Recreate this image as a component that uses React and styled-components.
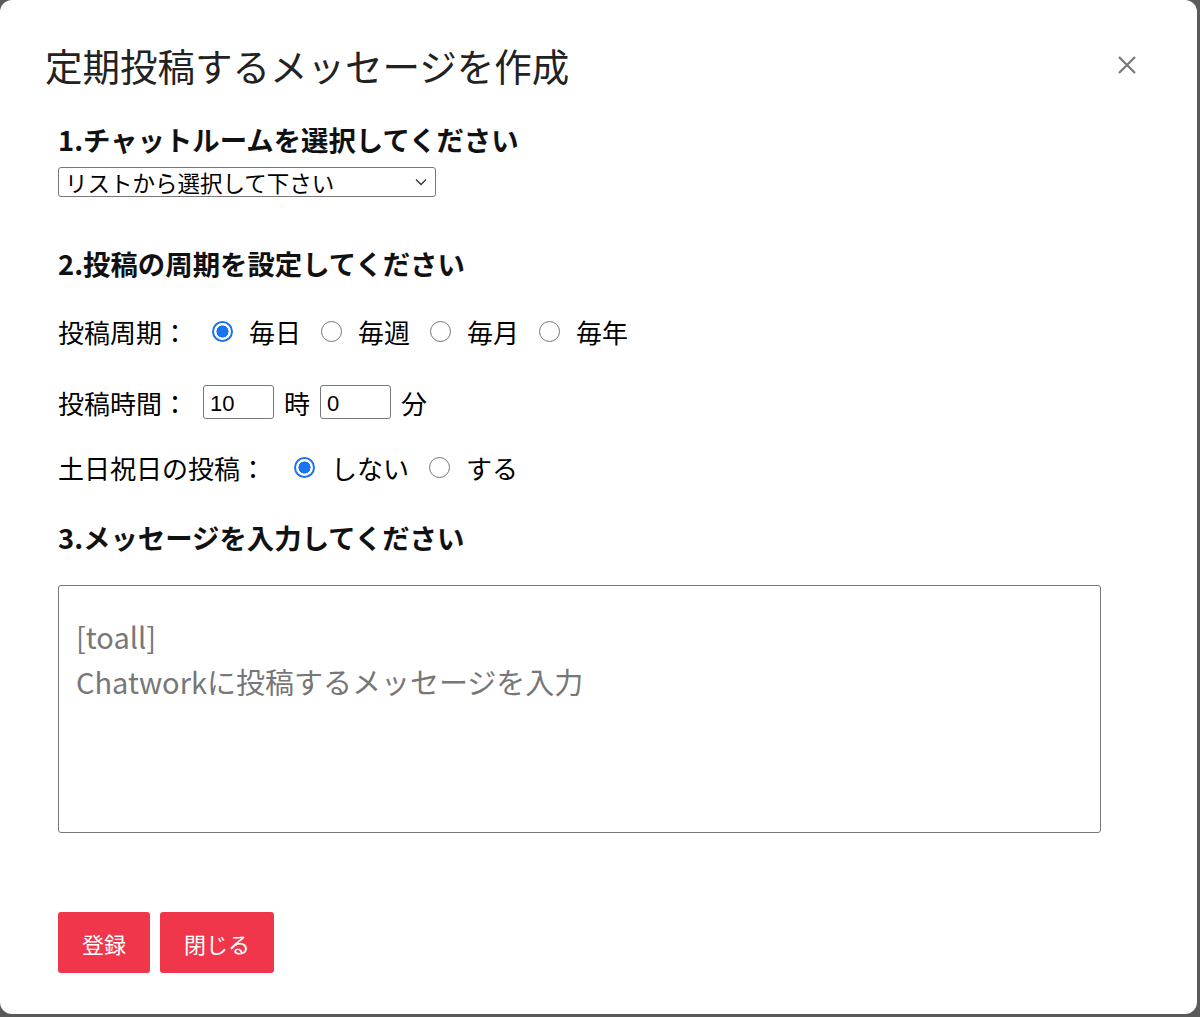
import React from 'react';
import styled, { createGlobalStyle } from 'styled-components';

const GlobalStyle = createGlobalStyle`
  html, body {
    margin: 0;
    padding: 0;
    background: #5a5a5a;
  }
  body {
    font-family: "Noto Sans CJK JP", "Noto Sans", sans-serif;
  }
`;

const Modal = styled.div`
  width: 1197px;
  height: 1014px;
  box-sizing: border-box;
  background: #ffffff;
  border-radius: 12px;
  padding: 43px 0 0 0;
  display: flex;
  flex-direction: column;
`;

const Header = styled.div`
  display: flex;
  align-items: center;
  justify-content: space-between;
  padding: 0 58px 0 45px;
`;

const Title = styled.h2`
  margin: 0;
  font-size: 37.5px;
  line-height: 44px;
  font-weight: 400;
  color: #222;
`;

const CloseButton = styled.button`
  border: none;
  background: none;
  padding: 0;
  width: 24px;
  height: 24px;
  display: flex;
  align-items: center;
  justify-content: center;
  cursor: pointer;
`;

const Body = styled.div`
  padding: 0 96px 0 58px;
  display: flex;
  flex-direction: column;
`;

const Heading = styled.h3`
  margin: ${p => p.$top}px 0 0 0;
  font-size: 27.4px;
  line-height: 32px;
  font-weight: 700;
  color: #111;
`;

const Select = styled.select`
  margin-top: 12px;
  width: 378px;
  height: 30px;
  font-family: inherit;
  font-size: 22.5px;
  line-height: 28px;
  color: #000;
  border: 1px solid #777;
  border-radius: 3px;
  background: #fff;
  padding: 0 6px;
  appearance: none;
  background-image: url("data:image/svg+xml,%3Csvg xmlns='http://www.w3.org/2000/svg' width='12' height='8' viewBox='0 0 12 8'%3E%3Cpath d='M1 1.5l5 5 5-5' fill='none' stroke='%23333' stroke-width='1.3'/%3E%3C/svg%3E");
  background-repeat: no-repeat;
  background-position: right 8px center;
`;

const Row = styled.div`
  margin-top: ${p => p.$top}px;
  height: 34px;
  display: flex;
  align-items: center;
  font-size: 26px;
  color: #000;
`;

const RowLabel = styled.span`
  margin-right: ${p => p.$gap}px;
`;

const Radio = styled.input.attrs({ type: 'radio' })`
  appearance: none;
  margin: 0 16px 0 0;
  width: 21px;
  height: 21px;
  border-radius: 50%;
  border: 1.5px solid #767676;
  background: #fff;
  box-sizing: border-box;
  flex-shrink: 0;
  &:checked {
    border: 2px solid #1a73f0;
    background: radial-gradient(circle, #1a73f0 0 5.8px, #fff 6.3px);
  }
`;

const Option = styled.label`
  display: flex;
  align-items: center;
  margin-right: 20px;
`;

const NumberInput = styled.input`
  width: 71px;
  height: 34px;
  box-sizing: border-box;
  border: 1px solid #777;
  border-radius: 3px;
  font-family: "Liberation Sans", Arial, sans-serif;
  font-size: 22px;
  padding: 4px 6px 0;
  color: #000;
  margin: 0 10px 0 0;
`;

const Unit = styled.span`
  margin-right: 10px;
`;

const TextArea = styled.textarea`
  margin-top: 32px;
  width: 1043px;
  height: 248px;
  box-sizing: border-box;
  border: 1.5px solid #777;
  border-radius: 3px;
  padding: 28px 17px;
  font-family: "Noto Sans CJK JP", sans-serif;
  font-size: 29px;
  line-height: 45px;
  resize: none;
  &::placeholder {
    color: #777;
  }
`;

const Footer = styled.div`
  margin-top: 79px;
  display: flex;
  gap: 10px;
`;

const RedButton = styled.button`
  height: 61px;
  padding: 0 ${p => p.$pad}px;
  background: #f0364a;
  color: #fff;
  border: none;
  border-radius: 3px;
  font-family: "Noto Sans CJK JP", sans-serif;
  font-size: 22px;
  cursor: pointer;
`;

export default function App() {
  return (
    <>
      <GlobalStyle />
      <Modal>
        <Header>
          <Title>定期投稿するメッセージを作成</Title>
          <CloseButton aria-label="close">
            <svg width="20" height="20" viewBox="0 0 20 20">
              <path d="M2 2L18 18M18 2L2 18" stroke="#777" strokeWidth="2.2" />
            </svg>
          </CloseButton>
        </Header>
        <Body>
          <Heading $top={36}>1.チャットルームを選択してください</Heading>
          <Select defaultValue="">
            <option value="">リストから選択して下さい</option>
          </Select>

          <Heading $top={50}>2.投稿の周期を設定してください</Heading>
          <Row $top={35}>
            <RowLabel $gap={24}>投稿周期：</RowLabel>
            <Option><Radio name="cycle" defaultChecked />毎日</Option>
            <Option><Radio name="cycle" />毎週</Option>
            <Option><Radio name="cycle" />毎月</Option>
            <Option><Radio name="cycle" />毎年</Option>
          </Row>
          <Row $top={37}>
            <RowLabel $gap={15}>投稿時間：</RowLabel>
            <NumberInput defaultValue="10" />
            <Unit>時</Unit>
            <NumberInput defaultValue="0" />
            <Unit>分</Unit>
          </Row>
          <Row $top={31}>
            <RowLabel $gap={28}>土日祝日の投稿：</RowLabel>
            <Option><Radio name="holiday" defaultChecked />しない</Option>
            <Option><Radio name="holiday" />する</Option>
          </Row>

          <Heading $top={37}>3.メッセージを入力してください</Heading>
          <TextArea placeholder={'[toall]\nChatworkに投稿するメッセージを入力'} />

          <Footer>
            <RedButton $pad={24}>登録</RedButton>
            <RedButton $pad={24}>閉じる</RedButton>
          </Footer>
        </Body>
      </Modal>
    </>
  );
}
